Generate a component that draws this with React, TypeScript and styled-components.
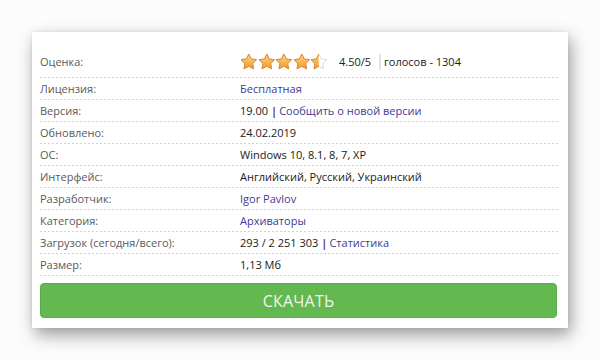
import React from 'react';
import styled, { createGlobalStyle } from 'styled-components';

const GlobalStyle = createGlobalStyle`
	html, body {
		margin: 0;
		padding: 0;
		background: #fcfcfc;
	}
	body {
		font-family: 'Open Sans', 'Noto Sans', 'DejaVu Sans', sans-serif;
	}
`;

const Page = styled.div`
	width: 600px;
	height: 360px;
	padding: 32px 32px 0 32px;
	box-sizing: border-box;
`;

const Card = styled.div`
	width: 536px;
	height: 296px;
	box-sizing: border-box;
	background: #fff;
	padding: 15px 10px 9px 8px;
	box-shadow: 3px 7px 16px rgba(0, 0, 0, 0.38), 0 0 4px rgba(0, 0, 0, 0.08);
	display: flex;
	flex-direction: column;
`;

const Row = styled.div<{ tall?: boolean }>`
	display: grid;
	grid-template-columns: 200px 1fr;
	align-items: center;
	height: ${({ tall }) => (tall ? '30px' : '21px')};
	padding-bottom: 1px;
	background-image: linear-gradient(to right, #d2d2d2 50%, transparent 50%);
	background-size: 4px 1px;
	background-repeat: repeat-x;
	background-position: 0 100%;
	font-size: 11px;
	line-height: 14px;
`;

const Label = styled.div`
	color: #5a5a5a;
`;

const Value = styled.div`
	color: #1a1a1a;
	display: flex;
	align-items: center;
	white-space: nowrap;
`;

const Link = styled.a`
	color: #3d3a94;
	text-decoration: none;
`;

const Pipe = styled.span`
	color: #573a8e;
	margin: 0 2px 0 3px;
	font-weight: 700;
`;

const Stars = styled.div`
	display: flex;
	margin-right: 11px;
`;

const Score = styled.span`
	color: #222;
	padding-right: 8px;
	border-right: 2px solid #e2e2e2;
	margin-right: 3px;
	line-height: 16px;
`;

const Button = styled.button`
	margin-top: 7px;
	height: 35px;
	width: 517px;
	border: 1px solid #5aac48;
	border-radius: 4px;
	background: #63b84f;
	color: #eef8ea;
	font-family: 'Open Sans', 'Noto Sans', sans-serif;
	font-size: 16px;
	letter-spacing: 0.2px;
	cursor: pointer;
	padding: 0;
`;

const STAR = 'M12 1.4l3.25 6.7 7.35 1.05-5.3 5.15 1.28 7.3L12 18.15l-6.58 3.45 1.28-7.3-5.3-5.15 7.35-1.05z';

const Star = ({ fill, id }: { fill: number; id: string }) => (
	<svg width="17.6" height="17.6" viewBox="0 0 24 24">
		<defs>
			<linearGradient id={`g${id}`} x1="0" y1="0" x2="0" y2="1">
				<stop offset="0" stopColor="#fdd596" />
				<stop offset="0.55" stopColor="#f8b453" />
				<stop offset="1" stopColor="#f19a32" />
			</linearGradient>
			<clipPath id={`c${id}`}>
				<rect x="0" y="0" width={24 * fill} height="24" />
			</clipPath>
		</defs>
		<path d={STAR} fill="#fff" stroke="#d4d4d4" strokeWidth="1.2" strokeLinejoin="round" />
		<g clipPath={`url(#c${id})`}>
			<path d={STAR} fill={`url(#g${id})`} stroke="#d9862a" strokeWidth="1.3" strokeLinejoin="round" />
		</g>
	</svg>
);

const rows: [string, React.ReactNode][] = [
	['Лицензия:', <Link href="#">Бесплатная</Link>],
	[
		'Версия:',
		<>
			19.00<Pipe>|</Pipe>
			<Link href="#">Сообщить о новой версии</Link>
		</>,
	],
	['Обновлено:', '24.02.2019'],
	['ОС:', 'Windows 10, 8.1, 8, 7, XP'],
	['Интерфейс:', 'Английский, Русский, Украинский'],
	['Разработчик:', <Link href="#">Igor Pavlov</Link>],
	['Категория:', <Link href="#">Архиваторы</Link>],
	[
		'Загрузок (сегодня/всего):',
		<>
			293 / 2 251 303<Pipe>|</Pipe>
			<Link href="#">Статистика</Link>
		</>,
	],
	['Размер:', '1,13 Мб'],
];

export default function App() {
	const rating = 4.5;
	return (
		<Page>
			<GlobalStyle />
			<Card>
				<Row tall>
					<Label>Оценка:</Label>
					<Value>
						<Stars>
							{[0, 1, 2, 3, 4].map((i) => (
								<Star key={i} id={String(i)} fill={Math.max(0, Math.min(1, rating - i))} />
							))}
						</Stars>
						<Score>4.50/5</Score>
						голосов - 1304
					</Value>
				</Row>
				{rows.map(([label, value]) => (
					<Row key={label}>
						<Label>{label}</Label>
						<Value>{value}</Value>
					</Row>
				))}
				<Button>СКАЧАТЬ</Button>
			</Card>
		</Page>
	);
}
